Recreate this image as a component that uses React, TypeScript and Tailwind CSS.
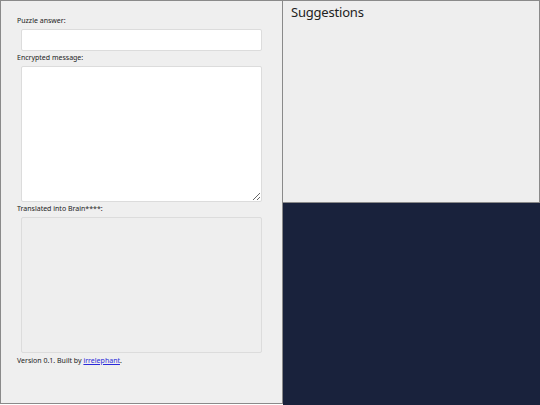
import { useState } from "react";

export default function App() {
  const [answer, setAnswer] = useState("");
  const [message, setMessage] = useState("");

  return (
    <div className="flex h-[405px] w-[540px] font-['Noto_Sans',sans-serif] text-[#222]">
      {/* Input column */}
      <div className="flex h-[404px] w-[283px] flex-col border border-[#8a8a8a] bg-[#efefef] pl-[16px] pt-[14px]">
        <label className="text-[7px] leading-[12px]">Puzzle answer:</label>
        <input
          value={answer}
          onChange={(e) => setAnswer(e.target.value)}
          className="mt-[2px] ml-[4px] block h-[22px] w-[241px] rounded-[2px] border border-[#dcdcdc] bg-white outline-none"
        />
        <label className="mt-[1px] text-[7px] leading-[12px]">Encrypted message:</label>
        <textarea
          value={message}
          onChange={(e) => setMessage(e.target.value)}
          className="mt-[2px] ml-[4px] block h-[136px] w-[241px] rounded-[2px] border border-[#dcdcdc] bg-white outline-none"
        />
        <label className="mt-[1px] text-[7px] leading-[12px]">Translated into Brain****:</label>
        <div className="mt-[2px] ml-[4px] h-[136px] w-[241px] rounded-[2px] border border-[#dcdcdc] bg-[#eeeeee]" />
        <p className="mt-[2px] text-[7px] leading-[12px]">
          Version 0.1. Built by{" "}
          <a href="#" className="text-[#2b2bd9] underline">
            irrelephant
          </a>
          .
        </p>
      </div>

      {/* Suggestions column */}
      <div className="flex flex-1 flex-col">
        <div className="h-[203px] border border-l-0 border-[#8a8a8a] bg-[#eeeeee] px-[8px] pt-[1px]">
          <h2 className="text-[13px] leading-[20px] tracking-[-0.2px]">Suggestions</h2>
        </div>
        <div className="flex-1 bg-[#19223c]" />
      </div>
    </div>
  );
}
